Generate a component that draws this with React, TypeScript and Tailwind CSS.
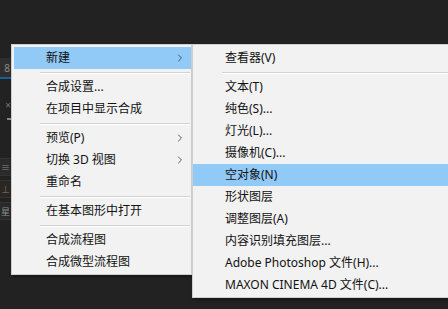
import { ChevronRight } from 'lucide-react';

type Entry = { label?: string; sub?: boolean; active?: boolean; sep?: boolean };

const mainMenu: Entry[] = [
  { label: '新建', sub: true, active: true },
  { sep: true },
  { label: '合成设置...' },
  { label: '在项目中显示合成' },
  { sep: true },
  { label: '预览(P)', sub: true },
  { label: '切换 3D 视图', sub: true },
  { label: '重命名' },
  { sep: true },
  { label: '在基本图形中打开' },
  { sep: true },
  { label: '合成流程图' },
  { label: '合成微型流程图' },
];

const newMenu: Entry[] = [
  { label: '查看器(V)' },
  { sep: true },
  { label: '文本(T)' },
  { label: '纯色(S)...' },
  { label: '灯光(L)...' },
  { label: '摄像机(C)...' },
  { label: '空对象(N)', active: true },
  { label: '形状图层' },
  { label: '调整图层(A)' },
  { label: '内容识别填充图层...' },
  { label: 'Adobe Photoshop 文件(H)...' },
  { label: 'MAXON CINEMA 4D 文件(C)...' },
];

const Menu = ({ items, sepInset }: { items: Entry[]; sepInset: string }) => (
  <ul className="flex flex-col">
    {items.map((item, i) =>
      item.sep ? (
        <li key={i} className={`pt-[3px] pb-[2px] ${sepInset}`}>
          <div className="h-[2px] border-t border-[#d2d2d2] border-b border-b-white" />
        </li>
      ) : (
        <li
          key={i}
          className={`h-[22px] flex items-center justify-between pl-[32px] pr-[5px] ${
            item.active ? 'bg-[#91c9f7]' : ''
          }`}
        >
          <span className="whitespace-nowrap">{item.label}</span>
          {item.sub && <ChevronRight size={12} strokeWidth={1.6} className="text-[#333]" />}
        </li>
      ),
    )}
  </ul>
);

export default function App() {
  return (
    <div
      className="w-[448px] h-[309px] overflow-hidden bg-[#222222] flex text-[12px] text-[#111]"
      style={{ fontFamily: '"Noto Sans", "Noto Sans CJK SC", sans-serif' }}
    >
      {/* panel behind the menus */}
      <div className="w-[11px] shrink-0 flex flex-col text-[10px] text-[#8a8a8a] leading-none">
        <div className="h-[58px]" />
        <div className="h-[19px] bg-[#2e2e2e] flex items-center justify-end pr-[1px]">8</div>
        <div className="h-[2px] bg-[#1d5e9a]" />
        <div className="h-[21px]" />
        <div className="h-[10px] flex items-center justify-end text-[#777]">×</div>
        <div className="h-[6px]" />
        <div className="h-[6px] flex items-center justify-end">
          <div className="w-[4px] h-[2px] bg-[#888]" />
        </div>
        <div className="h-[36px]" />
        <div className="h-[18px] bg-[#2a2a2a] border-y border-[#333] flex items-center justify-center text-[9px]">≡</div>
        <div className="h-[4px]" />
        <div className="h-[18px] bg-[#2a2622] border-y border-[#333] flex items-center justify-center text-[9px] text-[#8a7560]">⊥</div>
        <div className="h-[4px]" />
        <div className="h-[18px] bg-[#2a2a2a] border-y border-[#333] flex items-center justify-center text-[9px]">星</div>
      </div>

      <div className="flex items-start pt-[44px]">
        <div className="w-[181px] bg-[#f2f2f2] border border-[#cfcfcf] pl-[2px] pt-[2px] pb-[1px] shadow-[2px_2px_3px_rgba(0,0,0,0.35)]">
          <Menu items={mainMenu} sepInset="pl-[26px] pr-[1px]" />
        </div>
        <div className="w-[280px] bg-[#f2f2f2] border border-[#cfcfcf] pt-[2px] pb-[1px] shadow-[2px_2px_3px_rgba(0,0,0,0.35)]">
          <Menu items={newMenu} sepInset="pl-[29px]" />
        </div>
      </div>
    </div>
  );
}
